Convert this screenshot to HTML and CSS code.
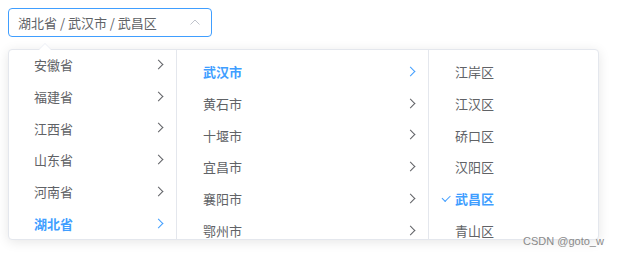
FILE: index.html
```html
<!DOCTYPE html>
<html lang="zh-CN">
<head>
    <meta charset="UTF-8">
    <meta name="viewport" content="width=device-width, initial-scale=1.0">
    <title>级联选择器</title>
    <link rel="stylesheet" href="styles.css">
</head>
<body>
    <div class="cascader">
        <span class="cascader-value">湖北省 / 武汉市 / 武昌区</span>
        <svg class="cascader-arrow" width="10" height="6" viewBox="0 0 10 6">
            <polyline points="0.5,5.5 5,1 9.5,5.5" fill="none" stroke="#c0c4cc" stroke-width="1"/>
        </svg>
    </div>

    <div class="cascader-panel">
        <div class="menu menu-province">
            <ul class="menu-list scrolled">
                <li class="node">安徽省<i class="chev"></i></li>
                <li class="node">福建省<i class="chev"></i></li>
                <li class="node">江西省<i class="chev"></i></li>
                <li class="node">山东省<i class="chev"></i></li>
                <li class="node">河南省<i class="chev"></i></li>
                <li class="node active">湖北省<i class="chev"></i></li>
            </ul>
        </div>
        <div class="menu menu-city">
            <ul class="menu-list">
                <li class="node active">武汉市<i class="chev"></i></li>
                <li class="node">黄石市<i class="chev"></i></li>
                <li class="node">十堰市<i class="chev"></i></li>
                <li class="node">宜昌市<i class="chev"></i></li>
                <li class="node">襄阳市<i class="chev"></i></li>
                <li class="node">鄂州市<i class="chev"></i></li>
            </ul>
        </div>
        <div class="menu menu-district">
            <ul class="menu-list">
                <li class="node">江岸区</li>
                <li class="node">江汉区</li>
                <li class="node">硚口区</li>
                <li class="node">汉阳区</li>
                <li class="node active checked">武昌区</li>
                <li class="node">青山区</li>
            </ul>
        </div>
    </div>

    <div class="watermark">CSDN @goto_w</div>
</body>
</html>
```

FILE: styles.css
```css
body {
    margin: 0;
    background: #fff;
    font-family: "Noto Sans CJK SC", "Noto Sans", sans-serif;
    font-size: 13px;
    color: #606266;
}

.cascader {
    box-sizing: border-box;
    margin: 8px 0 0 8px;
    width: 204px;
    height: 29px;
    padding: 0 10px 0 9px;
    border: 1px solid #409eff;
    border-radius: 4px;
    display: flex;
    align-items: center;
    justify-content: space-between;
}

.cascader-value {
    line-height: 1;
}

.cascader-arrow {
    margin-right: 1px;
    margin-top: -1px;
}

/* выпадающая панель */
.cascader-panel {
    position: absolute;
    top: 49px;
    left: 8px;
    height: 191px;
    box-sizing: border-box;
    display: flex;
    background: #fff;
    border: 1px solid #e4e7ed;
    border-radius: 4px;
    box-shadow: 0 2px 12px 0 rgba(0, 0, 0, 0.1);
}

.cascader-panel::before,
.cascader-panel::after {
    content: "";
    position: absolute;
    left: 30px;
    width: 0;
    height: 0;
    border: 6px solid transparent;
    border-top-width: 0;
}

.cascader-panel::before {
    top: -7px;
    border-bottom-color: #ebeef5;
}

.cascader-panel::after {
    top: -6px;
    border-bottom-color: #fff;
}

.menu {
    height: 100%;
    overflow: hidden;
    border-right: 1px solid #e4e7ed;
}

.menu-province { width: 167px; }
.menu-city { width: 251px; }
.menu-district { width: 169px; border-right: none; }

.menu-list {
    list-style: none;
    margin: 0;
    padding: 6px 0;
}

.menu-list.scrolled {
    margin-top: -7px;
}

.node {
    position: relative;
    height: 31.8px;
    line-height: 31.8px;
    padding: 0 30px 0 25px;
    white-space: nowrap;
}

.menu-city .node,
.menu-district .node {
    padding-left: 26px;
}

.node.active {
    color: #409eff;
    font-weight: bold;
}

.chev {
    position: absolute;
    right: 14px;
    top: 50%;
    width: 6px;
    height: 6px;
    margin-top: -4px;
    border-top: 1px solid currentColor;
    border-right: 1px solid currentColor;
    transform: rotate(45deg);
}

.node.active .chev {
    border-width: 1.3px;
}

.node.checked::before {
    content: "";
    position: absolute;
    left: 13px;
    top: 50%;
    width: 7px;
    height: 3.5px;
    margin-top: -4px;
    border-left: 1px solid #409eff;
    border-bottom: 1px solid #409eff;
    transform: rotate(-45deg);
}

.watermark {
    position: absolute;
    left: 523px;
    top: 235px;
    font-family: "Liberation Sans", Arial, sans-serif;
    font-size: 11px;
    color: #8a8a8a;
}
```
